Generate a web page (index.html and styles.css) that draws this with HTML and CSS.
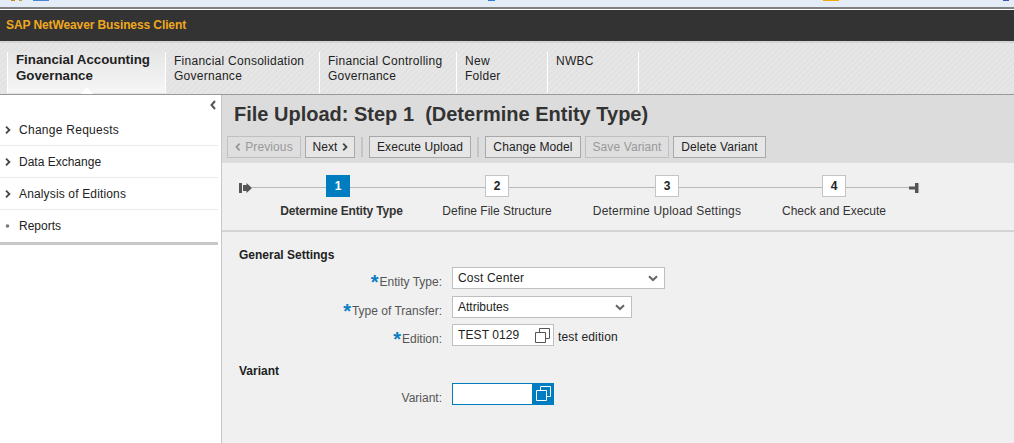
FILE: index.html
```html
<!DOCTYPE html>
<html lang="en">
<head>
  <meta charset="UTF-8">
  <title>SAP NetWeaver Business Client</title>
  <link rel="stylesheet" href="styles.css">
</head>
<body>
  <div class="strip"></div>
  <div class="brand">SAP NetWeaver Business Client</div>

  <nav class="tabs">
    <div class="tab tab-active">Financial Accounting<br>Governance<span class="notch"></span></div>
    <div class="tab tab-fc">Financial Consolidation<br>Governance</div>
    <div class="tab tab-ct">Financial Controlling<br>Governance</div>
    <div class="tab tab-new">New<br>Folder</div>
    <div class="tab tab-nwbc">NWBC</div>
  </nav>

  <div class="main">
    <aside class="side">
      <div class="collapse">
        <svg width="6" height="10" viewBox="0 0 6 10"><path d="M5 1 1.500 5 5 9" fill="none" stroke="#555" stroke-width="2"/></svg>
      </div>
      <ul class="menu">
        <li class="wide"><svg class="chev" width="6" height="8" viewBox="0 0 6 8"><path d="M1 .7 4.400 4 1 7.300" fill="none" stroke="#444" stroke-width="1.800"/></svg>Change Requests</li>
        <li><svg class="chev" width="6" height="8" viewBox="0 0 6 8"><path d="M1 .7 4.400 4 1 7.300" fill="none" stroke="#444" stroke-width="1.800"/></svg>Data Exchange</li>
        <li class="mid"><svg class="chev" width="6" height="8" viewBox="0 0 6 8"><path d="M1 .7 4.400 4 1 7.300" fill="none" stroke="#444" stroke-width="1.800"/></svg>Analysis of Editions</li>
        <li><svg class="chev" width="6" height="8" viewBox="0 0 6 8"><circle cx="2.500" cy="4" r="1.800" fill="#777"/></svg>Reports</li>
      </ul>
    </aside>

    <section class="content">
      <header class="head">
        <h1>File Upload: Step 1&nbsp; (Determine Entity Type)</h1>
        <div class="toolbar">
          <button class="btn off b-prev"><svg width="6" height="8" viewBox="0 0 6 8"><path d="M4.600 .7 1.400 4l3.200 3.300" fill="none" stroke="#999" stroke-width="1.800"/></svg>Previous</button>
          <button class="btn b-next"><span>Next</span><svg width="6" height="8" viewBox="0 0 6 8"><path d="M1.200 .7 4.500 4 1.200 7.300" fill="none" stroke="#444" stroke-width="1.800"/></svg></button>
          <span class="sep"></span>
          <button class="btn b-exec">Execute Upload</button>
          <span class="sep"></span>
          <button class="btn b-model">Change Model</button>
          <button class="btn off b-save">Save Variant</button>
          <button class="btn b-del">Delete Variant</button>
        </div>
      </header>

      <div class="steps">
        <div class="track">
          <svg class="start" width="13" height="10" viewBox="0 0 13 10"><path d="M0 0h3v10H0zM4 2h3.500V0L13 5l-5.500 5V8H4z" fill="#555"/></svg>
          <svg class="end" width="10" height="10" viewBox="0 0 10 10"><path d="M0 3.500h6V0h3.500v10H6V6.500H0z" fill="#555"/></svg>
          <div class="step step-1"><b class="num on">1</b><span class="cap cap-on">Determine Entity Type</span></div>
          <div class="step step-2"><b class="num">2</b><span class="cap">Define File Structure</span></div>
          <div class="step step-3"><b class="num">3</b><span class="cap cap-wide">Determine Upload Settings</span></div>
          <div class="step step-4"><b class="num">4</b><span class="cap">Check and Execute</span></div>
        </div>
      </div>

      <div class="form">
        <h2>General Settings</h2>
        <div class="row">
          <label><i>*</i>Entity Type:</label>
          <div class="field w-entity">Cost Center<svg class="dd" width="10" height="7" viewBox="0 0 10 7"><path d="M1 1.200 5 5l4-3.800" fill="none" stroke="#666" stroke-width="2"/></svg></div>
        </div>
        <div class="row row-tight">
          <label><i>*</i>Type of Transfer:</label>
          <div class="field w-transfer">Attributes<svg class="dd" width="10" height="7" viewBox="0 0 10 7"><path d="M1 1.200 5 5l4-3.800" fill="none" stroke="#666" stroke-width="2"/></svg></div>
        </div>
        <div class="row">
          <label><i>*</i>Edition:</label>
          <div class="field w-edition">TEST 0129<svg class="copy" width="15" height="15" viewBox="0 0 15 15"><path d="M4.500 4V.5h10v10H11M.5 4.500h10v10H.5z" fill="none" stroke="#555"/></svg></div>
          <span class="note">test edition</span>
        </div>
        <h2 class="second">Variant</h2>
        <div class="row">
          <label>Variant:</label>
          <div class="field w-variant"><span class="vh"><svg width="15" height="15" viewBox="0 0 15 15"><path d="M4.500 4V.5h10v10H11M.5 4.500h10v10H.5z" fill="none" stroke="#fff"/></svg></span></div>
        </div>
      </div>
    </section>
  </div>
</body>
</html>
```

FILE: styles.css
```css
* {
  box-sizing: border-box;
}
html, body {
  height: 100%;
}
body {
  margin: 0;
  overflow: hidden;
  font-family: "Liberation Sans", Arial, sans-serif;
  font-size: 12px;
  color: #222;
  background: #f0f0f0;
}
/* bottom edge of the browser chrome: bits of icons cut off by the window */
.strip {
  height: 10px;
  background-color: #e4ecf7;
  background-image:
    linear-gradient(#c08a20, #c08a20),
    linear-gradient(#c9a030, #c9a030),
    linear-gradient(#4a86d8, #4a86d8),
    linear-gradient(#2f80d8, #2f80d8),
    linear-gradient(#f0ac00, #f0ac00),
    linear-gradient(#3f55a8, #3f55a8);
  background-repeat: no-repeat;
  background-size: 4px 1px, 3px 1px, 16px 1px, 7px 1px, 16px 1px, 6px 1px;
  background-position: 11px 0, 19px 0, 33px 0, 488px 0, 823px 0, 1003px 0;
  border-bottom: 1px solid #fff;
  box-shadow: inset 0 -2px 0 #808080;
}
.brand {
  height: 31px;
  line-height: 31px;
  padding-left: 6px;
  background: #333;
  color: #f0a81e;
  font-size: 12px;
  font-weight: bold;
  letter-spacing: -0.1px;
}
.tabs {
  display: flex;
  height: 54px;
  padding: 9px 0 0 7px;
  background: repeating-linear-gradient(135deg, #e6e6e6 0 2px, #e2e2e2 2px 4px);
  border-top: 2px solid #d4d4d4;
  border-bottom: 1px solid #999;
}
.tab {
  position: relative;
  height: 41px;
  padding: 2px 8px 0;
  border-right: 1px solid #fff;
  line-height: 15px;
  letter-spacing: 0.27px;
  color: #222;
}
.tab-active {
  width: 159px;
  padding-top: 0;
  border-left: 1px solid #fff;
  background: linear-gradient(#e6e6e6, #f6f6f6);
  font-size: 13.3px;
  font-weight: bold;
  line-height: 16px;
  letter-spacing: 0;
  white-space: nowrap;
}
.tab-fc { width: 154px; }
.tab-ct { width: 137px; }
.tab-new { width: 91px; }
.tab-nwbc { width: 91px; }
.notch {
  position: absolute;
  left: 73px;
  bottom: -1px;
  border-left: 6px solid transparent;
  border-right: 6px solid transparent;
  border-bottom: 7px solid #fff;
}
.main {
  display: flex;
  height: 348px;
}
.side {
  width: 222px;
  background: #fff;
  border-right: 1px solid #c8c8c8;
}
.collapse {
  height: 19px;
  padding: 4px 5px 0 0;
  text-align: right;
}
.menu {
  list-style: none;
  margin: 0 3px 0 0;
  padding: 0;
  border-bottom: 3px solid #c8c8c8;
}
.menu li {
  display: flex;
  align-items: center;
  height: 32px;
  padding-left: 5px;
  border-bottom: 1px solid #eaeaea;
}
.menu li:last-child {
  border-bottom: 0;
}
.menu li.wide { letter-spacing: 0.27px; }
.menu li.mid { letter-spacing: 0.15px; }
.chev {
  margin-right: 8px;
}
.content {
  flex: 1;
}
.head {
  height: 68px;
  padding: 7px 0 0 5px;
  background: #dcdcdc;
}
.head h1 {
  margin: 0 0 0 7px;
  font-size: 20px;
  line-height: 24px;
  color: #333;
}
.toolbar {
  display: flex;
  align-items: center;
  margin-top: 9px;
  height: 24px;
}
.btn {
  flex: none;
  height: 22px;
  margin-right: 4px;
  padding: 0;
  display: flex;
  align-items: center;
  justify-content: center;
  gap: 4px;
  background: #e6e6e6;
  border: 1px solid #a8a8a8;
  font: 12px "Liberation Sans", Arial, sans-serif;
  letter-spacing: 0.1px;
  color: #222;
}
.btn.off {
  border-color: #c0c0c0;
  color: #999;
  background: #dedede;
}
.b-prev { width: 74px; }
.b-next { width: 50px; }
.b-exec { width: 102px; }
.b-model { width: 96px; }
.b-save { width: 84px; }
.b-del { width: 93px; }
.sep {
  flex: none;
  width: 2px;
  height: 20px;
  margin: 0 6px 0 2px;
  background: #c4c4c4;
}
.steps {
  height: 69px;
  border-bottom: 2px solid #d4d4d4;
}
.track {
  position: relative;
  height: 66px;
}
.track::before {
  content: "";
  position: absolute;
  left: 30px;
  top: 24px;
  width: 660px;
  height: 1px;
  background: #b8b8b8;
}
.start {
  position: absolute;
  left: 17px;
  top: 20px;
}
.end {
  position: absolute;
  left: 687px;
  top: 20px;
}
.step {
  position: absolute;
  top: 12px;
  width: 180px;
  margin-left: -90px;
  text-align: center;
}
.step-1 { left: 116px; }
.step-2 { left: 275px; }
.step-3 { left: 445px; }
.step-4 { left: 612px; }
.num {
  display: block;
  width: 24px;
  height: 22px;
  margin: 0 auto 7px;
  background: #fff;
  border: 1px solid #c4c4c4;
  font-size: 12px;
  line-height: 20px;
}
.num.on {
  background: #007cc0;
  border-color: #007cc0;
  color: #fff;
}
.cap {
  display: inline-block;
  color: #333;
}
.cap-on {
  margin-left: 7px;
  font-weight: bold;
  letter-spacing: -0.15px;
}
.cap-wide {
  letter-spacing: 0.2px;
}
.form {
  padding: 16px 0 0 17px;
}
.form h2 {
  margin: 0;
  font-size: 12px;
  line-height: 14px;
  color: #222;
}
.form h2.second {
  margin-top: 11px;
}
.row {
  display: flex;
  align-items: flex-start;
  height: 29px;
}
.row-tight {
  height: 28px;
}
.form h2 + .row {
  margin-top: 5px;
}
.form h2.second + .row {
  margin-top: 5px;
}
.row label {
  width: 213px;
  padding: 8px 10px 0 0;
  text-align: right;
  color: #555;
}
.row label i {
  font-style: normal;
  font-weight: bold;
  font-size: 20px;
  line-height: 10px;
  vertical-align: -3px;
  color: #0a7cc4;
  margin-right: 1px;
}
.field {
  position: relative;
  height: 22px;
  padding-left: 5px;
  line-height: 20px;
  background: #fff;
  border: 1px solid #bfbfbf;
  color: #222;
  letter-spacing: 0.1px;
}
.w-entity { width: 213px; letter-spacing: 0.2px; }
.w-transfer { width: 180px; letter-spacing: 0; }
.w-edition { width: 102px; }
.w-variant { width: 102px; border-color: #007cc0; }
.dd {
  position: absolute;
  right: 6px;
  top: 7px;
}
.copy {
  position: absolute;
  right: 3px;
  top: 3px;
}
.vh {
  position: absolute;
  right: -1px;
  top: -1px;
  width: 22px;
  height: 22px;
  padding: 3px 0 0 4px;
  background: #007cc0;
}
.vh svg {
  display: block;
}
.note {
  margin-left: 4px;
  line-height: 26px;
  letter-spacing: 0.15px;
  color: #222;
}
```
